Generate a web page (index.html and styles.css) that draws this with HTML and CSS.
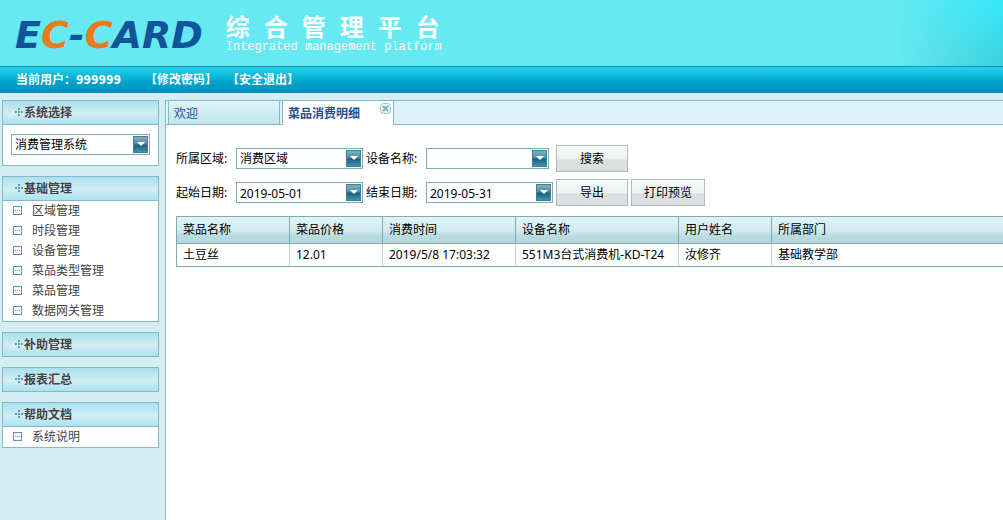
FILE: index.html
```html
<!DOCTYPE html>
<html lang="zh-CN">
<head>
<meta charset="utf-8">
<title>综合管理平台</title>
<link rel="stylesheet" href="styles.css">
</head>
<body>
<header class="banner">
  <div class="logo"><span class="logo-blue">E</span><span class="logo-orange">C</span><span class="logo-blue">-</span><span class="logo-orange">C</span><span class="logo-blue">ARD</span></div>
  <div class="brand">
    <h1 class="brand-title"><span>综</span><span>合</span><span>管</span><span>理</span><span>平</span><span>台</span></h1>
    <p class="brand-sub">Integrated management platform</p>
  </div>
</header>
<nav class="userbar">
  <span class="user">当前用户：999999</span>
  <a href="#password">【修改密码】</a>
  <a href="#logout">【安全退出】</a>
</nav>

<svg class="defs" aria-hidden="true">
  <symbol id="dots" viewBox="0 0 8 8"><path fill="#5a9fb8" d="M3 0h2v2H3zM0 3h2v2H0zM3 3h2v2H3zM6 3h2v2H6zM3 6h2v2H3z"/></symbol>
  <symbol id="leaf" viewBox="0 0 9 9"><path fill="#4f9bb3" fill-rule="evenodd" d="M0 0h9v9H0zM1 1v7h7V1z"/><path fill="#4f9bb3" d="M2 4h1v1H2zM4 4h1v1H4zM6 4h1v1H6z"/></symbol>
</svg>

<div class="layout">
  <aside class="sidebar">
    <section class="panel">
      <h2 class="panel-head"><svg class="dots"><use href="#dots"/></svg><label for="system">系统选择</label></h2>
      <div class="panel-body">
        <div class="combo"><select id="system" class="combo-field"><option>消费管理系统</option></select></div>
      </div>
    </section>
    <section class="panel">
      <h2 class="panel-head"><svg class="dots"><use href="#dots"/></svg>基础管理</h2>
      <ul class="menu">
        <li><svg class="leaf"><use href="#leaf"/></svg><a href="#area">区域管理</a></li>
        <li><svg class="leaf"><use href="#leaf"/></svg><a href="#period">时段管理</a></li>
        <li><svg class="leaf"><use href="#leaf"/></svg><a href="#device">设备管理</a></li>
        <li><svg class="leaf"><use href="#leaf"/></svg><a href="#dishtype">菜品类型管理</a></li>
        <li><svg class="leaf"><use href="#leaf"/></svg><a href="#dish">菜品管理</a></li>
        <li><svg class="leaf"><use href="#leaf"/></svg><a href="#gateway">数据网关管理</a></li>
      </ul>
    </section>
    <section class="panel">
      <h2 class="panel-head"><svg class="dots"><use href="#dots"/></svg>补助管理</h2>
    </section>
    <section class="panel">
      <h2 class="panel-head"><svg class="dots"><use href="#dots"/></svg>报表汇总</h2>
    </section>
    <section class="panel">
      <h2 class="panel-head"><svg class="dots"><use href="#dots"/></svg>帮助文档</h2>
      <ul class="menu">
        <li><svg class="leaf"><use href="#leaf"/></svg><a href="#help">系统说明</a></li>
      </ul>
    </section>
  </aside>

  <main class="main">
    <div class="tabs">
      <a class="tab" href="#welcome">欢迎</a>
      <div class="tab tab-active"><a href="#detail">菜品消费明细</a><button class="close" type="button" aria-label="关闭"><svg viewBox="0 0 11 11"><rect x=".5" y=".5" width="10" height="10" rx="3" fill="#e6f5f8" stroke="#8fc6cf"/><path d="M3 3l5 5M8 3l-5 5" stroke="#7fb0bd" stroke-width="2"/></svg></button></div>
    </div>
    <div class="content">
      <form class="filters">
        <label for="region">所属区域:</label>
        <div class="combo"><select id="region" class="combo-field"><option>消费区域</option></select></div>
        <label for="dev">设备名称:</label>
        <div class="combo combo-short"><select id="dev" class="combo-field"><option></option></select></div>
        <div class="actions"><button class="btn" type="button">搜索</button></div>
        <label for="start">起始日期:</label>
        <div class="combo"><input id="start" class="combo-field" type="text" value="2019-05-01"></div>
        <label for="end">结束日期:</label>
        <div class="combo"><input id="end" class="combo-field" type="text" value="2019-05-31"></div>
        <div class="actions"><button class="btn" type="button">导出</button><button class="btn" type="button">打印预览</button></div>
      </form>
      <table class="grid">
        <colgroup><col class="w-name"><col class="w-small"><col class="w-time"><col class="w-device"><col class="w-small"><col></colgroup>
        <thead><tr><th>菜品名称</th><th>菜品价格</th><th>消费时间</th><th>设备名称</th><th>用户姓名</th><th>所属部门</th></tr></thead>
        <tbody><tr><td>土豆丝</td><td>12.01</td><td>2019/5/8 17:03:32</td><td>551M3台式消费机-KD-T24</td><td>汝修齐</td><td>基础教学部</td></tr></tbody>
      </table>
    </div>
  </main>
</div>
</body>
</html>
```
FILE: styles.css
```css
*,
*::before,
*::after { box-sizing: border-box; }

body {
  margin: 0;
  min-height: 100vh;
  display: flex;
  flex-direction: column;
  background: #d4edf2;
  color: #000;
  font: 12px/20px "Noto Sans", "Noto Sans CJK SC", sans-serif;
}

a { color: inherit; text-decoration: none; }
.defs { display: none; }

/* Banner */
.banner {
  display: flex;
  height: 66px;
  padding-left: 15px;
  gap: 23px;
  background:
    linear-gradient(to right, #66e9f2, rgba(102, 233, 242, 0)) right / 108px 100% no-repeat,
    linear-gradient(to bottom, #36e8fa, #3cd0da) right / 108px 100% no-repeat,
    #66e9f2;
}
.logo {
  padding-top: 13px;
  font: italic bold 38px/44px "DejaVu Sans", sans-serif;
}
.logo-blue { color: #10549a; }
.logo-orange { color: #e87c1c; }
.brand { padding-top: 14px; color: #fff; }
.brand-title {
  display: flex;
  gap: 14px;
  margin: 0;
  font: bold 24px/24px "Noto Sans CJK SC", sans-serif;
}
.brand-sub { margin: 2px 0 0; font: 12px/14px "Liberation Mono", monospace; }

.userbar {
  display: flex;
  align-items: center;
  gap: 10px;
  height: 27px;
  padding-left: 16px;
  border-top: 1px solid #1c8bb8;
  background: linear-gradient(#25d5ec, #00a5cc 55%, #008cbe);
  color: #fff;
  font-family: "DejaVu Sans Condensed", "Noto Sans CJK SC", sans-serif;
  font-weight: bold;
}
.user { margin-right: 14px; }

.layout {
  flex: 1;
  display: grid;
  grid-template-columns: 165px 1fr;
  padding-top: 7px;
}

/* Sidebar */
.sidebar {
  display: flex;
  flex-direction: column;
  gap: 10px;
  padding: 0 6px 10px 2px;
  color: #444;
}
.panel { border: 1px solid #86b9c8; background: #fff; }
.panel-head {
  display: flex;
  align-items: center;
  gap: 1px;
  height: 23px;
  margin: 0;
  padding-left: 12px;
  background: linear-gradient(#a9e0ee, #d3edf4 55%, #abe2ef);
  font-size: 12px;
  font-weight: bold;
}
.panel-head + * { border-top: 1px solid #86b9c8; }
.dots { width: 8px; height: 8px; margin-bottom: 1px; }
.panel-body { padding: 9px 8px 10px; }
.menu { margin: 0; padding: 0; list-style: none; }
.menu li {
  display: flex;
  align-items: center;
  gap: 10px;
  height: 20px;
  padding-left: 10px;
  line-height: 22px;
}
.leaf { width: 9px; height: 9px; margin-bottom: 1px; }

/* Drop-down fields */
.combo {
  position: relative;
  height: 21px;
  border: 1px solid #7badb0;
  background: #fff;
}
.combo::before {
  content: "";
  position: absolute;
  top: 1px;
  right: 1px;
  width: 15px;
  height: 17px;
  border: 1px solid #3e7f9a;
  background: linear-gradient(#82adc1, #4f8ba6 48%, #1d5c7d 52%, #4390ad);
  pointer-events: none;
}
.combo::after {
  content: "";
  position: absolute;
  top: 7px;
  right: 4px;
  border: solid transparent;
  border-width: 4px 4px 0;
  border-top-color: #fff;
  pointer-events: none;
}
.combo-field {
  display: block;
  appearance: none;
  width: 100%;
  height: 19px;
  margin: 0;
  padding: 1px 18px 0 3px;
  border: 0;
  background: transparent;
  color: #000;
  font: inherit;
  line-height: 18px;
}

/* Main area */
.main {
  min-width: 0;
  border: solid #86b9c8;
  border-width: 1px 0 0 1px;
  background: #fff;
}
.tabs {
  display: flex;
  gap: 2px;
  height: 24px;
  padding-left: 2px;
  background: linear-gradient(#86b9c8, #86b9c8) bottom / 100% 1px no-repeat, #ddf1f8;
  color: #274f8c;
}
.tab {
  width: 112px;
  padding-left: 5px;
  border: solid #86b9c8;
  border-width: 0 1px 1px;
  background: linear-gradient(#e0f3f9, #bde5f0);
  line-height: 25px;
}
.tab-active {
  display: flex;
  justify-content: space-between;
  align-items: flex-start;
  padding-right: 2px;
  border-bottom: 0;
  background: #fff;
  font-weight: bold;
}
.close {
  width: 11px;
  height: 11px;
  margin: 2px 0 0;
  padding: 0;
  border: 0;
  background: none;
}
.close svg { display: block; }

.content { padding: 20px 0 10px 10px; }
.filters {
  display: grid;
  grid-template-columns: 57px 127px 57px 127px auto;
  gap: 7px 3px;
  align-items: center;
}
.filters label { line-height: 22px; }
.combo-short { margin-right: 4px; }
.actions { display: flex; gap: 3px; }
.btn {
  min-width: 72px;
  height: 27px;
  padding: 1px 12px 0;
  border: 1px solid #b0b9bc;
  background: linear-gradient(#f9fbfb, #eef2f2 50%, #dce2e2 55%, #d9dfdf);
  color: #000;
  font: inherit;
}

.grid {
  width: 100%;
  margin-top: 10px;
  table-layout: fixed;
  border: solid #7badb0;
  border-width: 1px 0 0 1px;
  border-spacing: 0;
}
.w-name { width: 113px; }
.w-small { width: 93px; }
.w-time { width: 133px; }
.w-device { width: 163px; }
.grid th,
.grid td {
  padding: 0 0 0 6px;
  border: solid #7badb0;
  border-width: 0 1px 1px 0;
  font-weight: normal;
  text-align: left;
  white-space: nowrap;
}
.grid th {
  height: 27px;
  background: linear-gradient(#e0f3f5, #d3ebee 50%, #b7dbde 75%, #b5d6da);
}
.grid td { height: 23px; border-right-color: #c0d8dc; }
.grid th:last-child,
.grid td:last-child { border-right: 0; }
```
